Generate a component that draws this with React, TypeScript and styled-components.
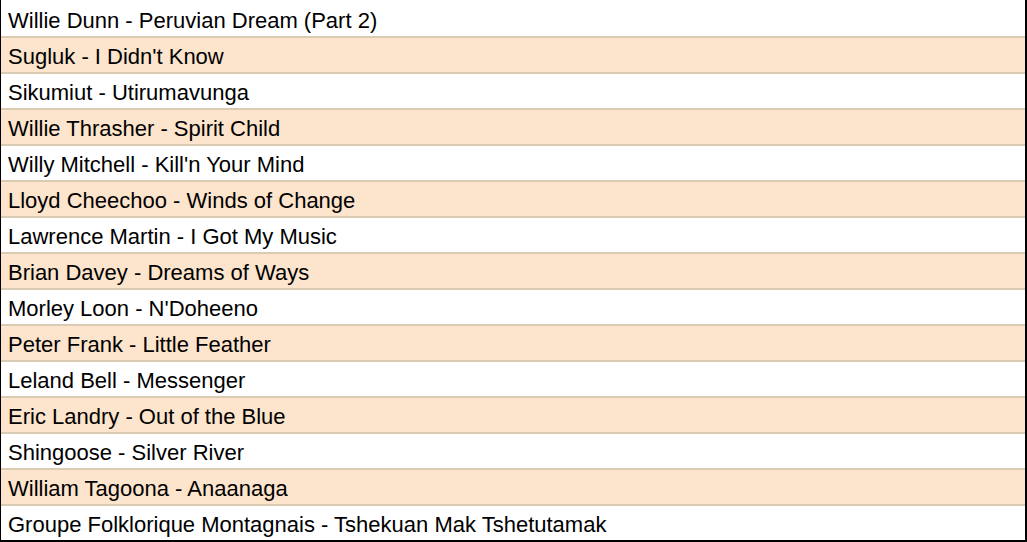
import React from 'react';
import styled, { createGlobalStyle } from 'styled-components';

const GlobalStyle = createGlobalStyle`
  html, body {
    margin: 0;
    padding: 0;
    background: #ffffff;
  }
`;

const Table = styled.div`
  width: 1027px;
  height: 542px;
  box-sizing: border-box;
  border-left: 1px solid #000;
  border-right: 2px solid #000;
  border-bottom: 2px solid #000;
  display: flex;
  flex-direction: column;
  font-family: "Liberation Sans", Arial, sans-serif;
`;

const Row = styled.div<{ $shaded: boolean; $first: boolean }>`
  height: 36px;
  box-sizing: border-box;
  display: flex;
  align-items: center;
  padding: 3px 0 0 7px;
  font-size: 22px;
  color: #000;
  background: ${({ $shaded }) => ($shaded ? '#fde4cc' : '#ffffff')};
  border-top: 2px solid ${({ $first }) => ($first ? '#ffffff' : '#dccbb4')};
`;

const tracks = [
  'Willie Dunn - Peruvian Dream (Part 2)',
  "Sugluk - I Didn't Know",
  'Sikumiut - Utirumavunga',
  'Willie Thrasher - Spirit Child',
  "Willy Mitchell - Kill'n Your Mind",
  'Lloyd Cheechoo - Winds of Change',
  'Lawrence Martin - I Got My Music',
  'Brian Davey - Dreams of Ways',
  "Morley Loon - N'Doheeno",
  'Peter Frank - Little Feather',
  'Leland Bell - Messenger',
  'Eric Landry - Out of the Blue',
  'Shingoose - Silver River',
  'William Tagoona - Anaanaga',
  'Groupe Folklorique Montagnais - Tshekuan Mak Tshetutamak',
];

const App: React.FC = () => {
  return (
    <>
      <GlobalStyle />
      <Table>
        {tracks.map((t, i) => (
          <Row key={t} $shaded={i % 2 === 1} $first={i === 0}>
            {t}
          </Row>
        ))}
      </Table>
    </>
  );
};

export default App;
